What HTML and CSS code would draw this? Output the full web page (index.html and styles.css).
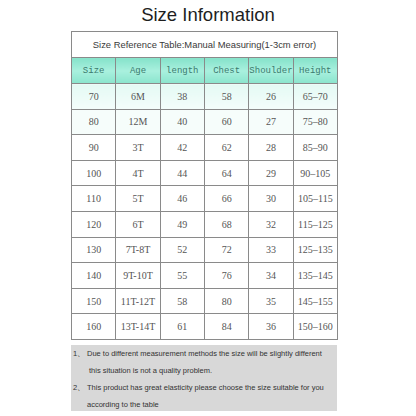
FILE: index.html
```html
<!DOCTYPE html>
<html>
<head>
<meta charset="utf-8">
<link rel="stylesheet" href="styles.css">
</head>
<body>
<div class="page">
  <h1 class="title">Size Information</h1>
  <table class="size-table">
    <tr><td class="caption" colspan="6">Size Reference Table:Manual Measuring(1-3cm error)</td></tr>
    <tr class="head"><th>Size</th><th>Age</th><th>length</th><th>Chest</th><th>Shoulder</th><th>Height</th></tr>
    <tr class="tint1"><td>70</td><td>6M</td><td>38</td><td>58</td><td>26</td><td>65–70</td></tr>
    <tr class="tint2"><td>80</td><td>12M</td><td>40</td><td>60</td><td>27</td><td>75–80</td></tr>
    <tr><td>90</td><td>3T</td><td>42</td><td>62</td><td>28</td><td>85–90</td></tr>
    <tr><td>100</td><td>4T</td><td>44</td><td>64</td><td>29</td><td>90–105</td></tr>
    <tr><td>110</td><td>5T</td><td>46</td><td>66</td><td>30</td><td>105–115</td></tr>
    <tr><td>120</td><td>6T</td><td>49</td><td>68</td><td>32</td><td>115–125</td></tr>
    <tr><td>130</td><td>7T-8T</td><td>52</td><td>72</td><td>33</td><td>125–135</td></tr>
    <tr><td>140</td><td>9T-10T</td><td>55</td><td>76</td><td>34</td><td>135–145</td></tr>
    <tr><td>150</td><td>11T-12T</td><td>58</td><td>80</td><td>35</td><td>145–155</td></tr>
    <tr><td>160</td><td>13T-14T</td><td>61</td><td>84</td><td>36</td><td>150–160</td></tr>
  </table>
  <div class="notes">
    <div class="note"><span class="num">1、</span><span class="line">Due to different measurement methods the size will be slightly different</span></div>
    <div class="note cont"><span class="line">this situation is not a quality problem.</span></div>
    <div class="note"><span class="num">2、</span><span class="line">This product has great elasticity please choose the size suitable for you</span></div>
    <div class="note cont2"><span class="line">according to the table</span></div>
  </div>
</div>
</body>
</html>
```
FILE: styles.css
```css
html, body {
  margin: 0;
  padding: 0;
  background: #ffffff;
}
.page {
  width: 416px;
  height: 416px;
  display: flex;
  flex-direction: column;
  align-items: flex-start;
}
.title {
  margin: 4px 0 0 0;
  width: 416px;
  text-align: center;
  font-family: "Liberation Sans", Arial, sans-serif;
  font-weight: normal;
  font-size: 18.5px;
  line-height: 22px;
  color: #1e1e1e;
}
.size-table {
  margin: 5px 0 0 71px;
  width: 267px;
  border-collapse: collapse;
  table-layout: fixed;
  border: 1px solid #9a9a9a;
}
.size-table td, .size-table th {
  border: 1px solid #8a8a8a;
  text-align: center;
  padding: 0;
  height: 24.6px;
  font-family: "Liberation Serif", "Times New Roman", serif;
  font-size: 10px;
  color: #555555;
  font-weight: normal;
}
.size-table .caption {
  height: 25px;
  font-family: "Liberation Sans", Arial, sans-serif;
  font-size: 9.4px;
  color: #3a3a3a;
  border-bottom: 1px solid #8a8a8a;
}
.size-table .head th {
  height: 25px;
  font-family: "Liberation Mono", "Courier New", monospace;
  font-size: 9px;
  color: #3b7a6e;
  background: linear-gradient(180deg, #86e3cb 0%, #a9f0de 50%, #8ae5cd 100%);
}
.size-table .tint1 td {
  background: linear-gradient(180deg, #e4faf4 0%, #f4fdfb 100%);
}
.size-table .tint2 td {
  background: #f6fdfb;
}
.notes {
  margin: 5px 0 0 71px;
  width: 266px;
  height: 66px;
  background: #d8d8d8;
  box-sizing: border-box;
  padding-top: 0;
  font-family: "Liberation Sans", Arial, sans-serif;
  font-size: 7.5px;
  color: #333333;
  display: flex;
  flex-direction: column;
}
.note {
  height: 17px;
  line-height: 17px;
  display: flex;
  white-space: nowrap;
}
.note .num {
  width: 16px;
  padding-left: 2px;
  box-sizing: border-box;
}
.note.cont {
  padding-left: 18px;
}
.note.cont2 {
  padding-left: 16px;
}
```
